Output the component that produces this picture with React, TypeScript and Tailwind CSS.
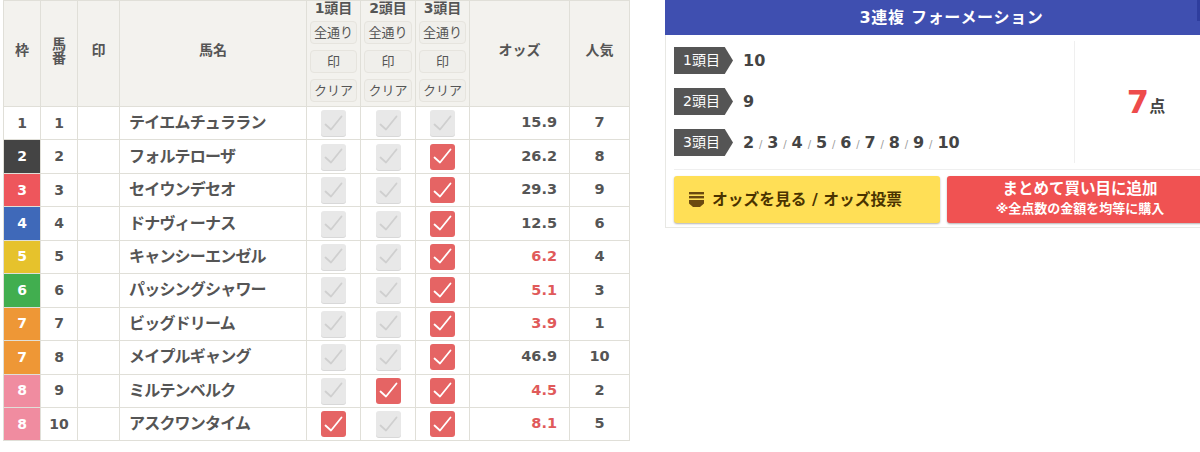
const font = '"DejaVu Sans","Noto Sans CJK JP",sans-serif';

const frameStyles: Record<number, string> = {
  1: "bg-white text-[#555]",
  2: "bg-[#444444] text-white",
  3: "bg-[#ee565c] text-white",
  4: "bg-[#3f69b9] text-white",
  5: "bg-[#e6c22c] text-white",
  6: "bg-[#41ae4f] text-white",
  7: "bg-[#ee9736] text-white",
  8: "bg-[#f08ca0] text-white",
};

const horses = [
  { frame: 1, no: 1, name: "テイエムチュララン", odds: "15.9", pop: 7, first: false, second: false, third: false },
  { frame: 2, no: 2, name: "フォルテローザ", odds: "26.2", pop: 8, first: false, second: false, third: true },
  { frame: 3, no: 3, name: "セイウンデセオ", odds: "29.3", pop: 9, first: false, second: false, third: true },
  { frame: 4, no: 4, name: "ドナヴィーナス", odds: "12.5", pop: 6, first: false, second: false, third: true },
  { frame: 5, no: 5, name: "キャンシーエンゼル", odds: "6.2", pop: 4, first: false, second: false, third: true },
  { frame: 6, no: 6, name: "パッシングシャワー", odds: "5.1", pop: 3, first: false, second: false, third: true },
  { frame: 7, no: 7, name: "ビッグドリーム", odds: "3.9", pop: 1, first: false, second: false, third: true },
  { frame: 7, no: 8, name: "メイプルギャング", odds: "46.9", pop: 10, first: false, second: false, third: true },
  { frame: 8, no: 9, name: "ミルテンベルク", odds: "4.5", pop: 2, first: false, second: true, third: true },
  { frame: 8, no: 10, name: "アスクワンタイム", odds: "8.1", pop: 5, first: true, second: false, third: true },
];

function Check({ on }: { on: boolean }) {
  return (
    <span
      className={`mx-auto flex h-[26px] w-[25px] items-center justify-center rounded-[3px] ${
        on ? "bg-[#e56464]" : "bg-[#e8e8e8] shadow-[0_1px_0_#d8d8d8]"
      }`}
    >
      <svg width="19" height="17" viewBox="0 0 19 17" fill="none">
        <path
          d="M1.5 9.5 L7 14.5 L17.5 1.5"
          stroke={on ? "#ffffff" : "#cfcfcf"}
          strokeWidth="1.8"
          strokeLinecap="round"
          strokeLinejoin="round"
        />
      </svg>
    </span>
  );
}

function HeaderPick({ label }: { label: string }) {
  return (
    <th className="border border-[#e0dfd8] px-[3px] align-top font-normal">
      <div className="mb-[6px] text-center text-[14px] leading-[14px] font-bold text-[#555]">{label}</div>
      <div className="flex flex-col gap-[6px]">
        {["全通り", "印", "クリア"].map((t) => (
          <div
            key={t}
            className="flex h-[23px] items-center justify-center rounded-[4px] border border-[#e6e4de] bg-[#f0efeb] text-[13px] text-[#555]"
          >
            {t}
          </div>
        ))}
      </div>
    </th>
  );
}

function SummaryRow({ label, children }: { label: string; children: React.ReactNode }) {
  return (
    <div className="flex h-[27px] items-center">
      <span className="flex h-[27px] w-[59px] items-center justify-center bg-[#555555] pl-[2px] pr-[6px] text-[14px] text-white [clip-path:polygon(0_0,86%_0,100%_50%,86%_100%,0_100%)]">
        {label}
      </span>
      <div className="ml-[10px] text-[16px] font-bold text-[#444]">{children}</div>
    </div>
  );
}

export default function App() {
  const thirds = [2, 3, 4, 5, 6, 7, 8, 9, 10];
  return (
    <div className="flex h-[452px] w-[1200px] items-start overflow-hidden bg-white pl-[3px]" style={{ fontFamily: font }}>
      <table className="w-[627px] shrink-0 table-fixed border-collapse text-[#555]">
        <colgroup>
          <col className="w-[37px]" />
          <col className="w-[37px]" />
          <col className="w-[42px]" />
          <col className="w-[187px]" />
          <col className="w-[54px]" />
          <col className="w-[55px]" />
          <col className="w-[54px]" />
          <col className="w-[100px]" />
          <col className="w-[60px]" />
        </colgroup>
        <thead>
          <tr className="h-[106px] bg-[#f3f2ee] text-[14px] font-bold">
            <th className="border border-[#e0dfd8] pb-[6px]">枠</th>
            <th className="border border-[#e0dfd8] pb-[6px] leading-[14px]">
              馬<br />番
            </th>
            <th className="border border-[#e0dfd8] pb-[6px]">印</th>
            <th className="border border-[#e0dfd8] pb-[6px]">馬名</th>
            <HeaderPick label="1頭目" />
            <HeaderPick label="2頭目" />
            <HeaderPick label="3頭目" />
            <th className="border border-[#e0dfd8] pb-[6px]">オッズ</th>
            <th className="border border-[#e0dfd8] pb-[6px]">人気</th>
          </tr>
        </thead>
        <tbody>
          {horses.map((h) => (
            <tr key={h.no} className="h-[33.45px] font-bold">
              <td className={`border border-[#e0dfd8] p-0 text-center text-[14px] ${frameStyles[h.frame]}`}>{h.frame}</td>
              <td className="border border-[#e0dfd8] p-0 text-center text-[14px]">{h.no}</td>
              <td className="border border-[#e0dfd8] p-0" />
              <td className="border border-[#e0dfd8] p-0 pl-[9px] text-[16px] tracking-[-0.8px] whitespace-nowrap">{h.name}</td>
              <td className="border border-[#e0dfd8] p-0">
                <Check on={h.first} />
              </td>
              <td className="border border-[#e0dfd8] p-0">
                <Check on={h.second} />
              </td>
              <td className="border border-[#e0dfd8] p-0">
                <Check on={h.third} />
              </td>
              <td
                className={`border border-[#e0dfd8] p-0 pr-[12px] text-right text-[14.5px] ${
                  parseFloat(h.odds) < 10 ? "text-[#e05a5a]" : ""
                }`}
              >
                {h.odds}
              </td>
              <td className="border border-[#e0dfd8] p-0 text-center text-[14.5px]">{h.pop}</td>
            </tr>
          ))}
        </tbody>
      </table>

      <section className="ml-[35px] w-[557px] shrink-0 border-b border-l border-[#e8e8e4]">
        <h2 className="relative -ml-px flex h-[35px] items-center justify-center bg-[#3f4fb0] pl-[16px] text-[16px] font-bold tracking-[0.7px] text-white">
          3連複 フォーメーション
          <span className="absolute top-0 left-[532px] h-[21px] w-[8px] bg-[#2f3e9e]" />
        </h2>
        <div className="mx-[8px] flex border-b border-[#efefef] pt-[6px] pb-[6px]">
          <div className="flex flex-1 flex-col gap-[14px] pt-[6px] pb-[7px]">
            <SummaryRow label="1頭目">10</SummaryRow>
            <SummaryRow label="2頭目">9</SummaryRow>
            <SummaryRow label="3頭目">
              {thirds.map((n, i) => (
                <span key={n}>
                  {n}
                  {i < thirds.length - 1 && <span className="mx-[4.9px] text-[10px] font-normal text-[#999]">/</span>}
                </span>
              ))}
            </SummaryRow>
          </div>
          <div className="flex w-[140px] items-center justify-center border-l border-[#efefef] pl-[3px]">
            <span className="text-[32px] leading-none font-bold text-[#ee4b4b]">7</span>
            <span className="mt-[10px] text-[16px] font-bold text-[#444]">点</span>
          </div>
        </div>
        <div className="flex gap-[7px] px-[8px] pt-[6px] pb-[4px]">
          <button className="flex h-[47px] w-[266px] items-center rounded-[3px] bg-[#ffdf56] pl-[15px] text-[15.75px] font-bold text-[#4a3300] shadow-[0_1px_2px_rgba(0,0,0,0.3)]">
            <svg width="15" height="17" viewBox="0 0 15 17" className="mr-[8px]">
              <rect x="0" y="1" width="15" height="2.4" fill="#6b4a10" />
              <rect x="0" y="5" width="15" height="2.4" fill="#6b4a10" />
              <path d="M0 9h15v3.5l-4 3.5h-7l-4-3.5z" fill="#6b4a10" />
            </svg>
            オッズを見る / オッズ投票
          </button>
          <button className="flex h-[47px] w-[266px] flex-col items-center justify-center gap-[3px] rounded-[3px] bg-[#f05252] pb-[2px] font-bold text-white shadow-[0_1px_2px_rgba(0,0,0,0.3)]">
            <span className="text-[15.5px] leading-[17px]">まとめて買い目に追加</span>
            <span className="text-[13px] leading-[16px]">※全点数の金額を均等に購入</span>
          </button>
        </div>
      </section>
    </div>
  );
}
